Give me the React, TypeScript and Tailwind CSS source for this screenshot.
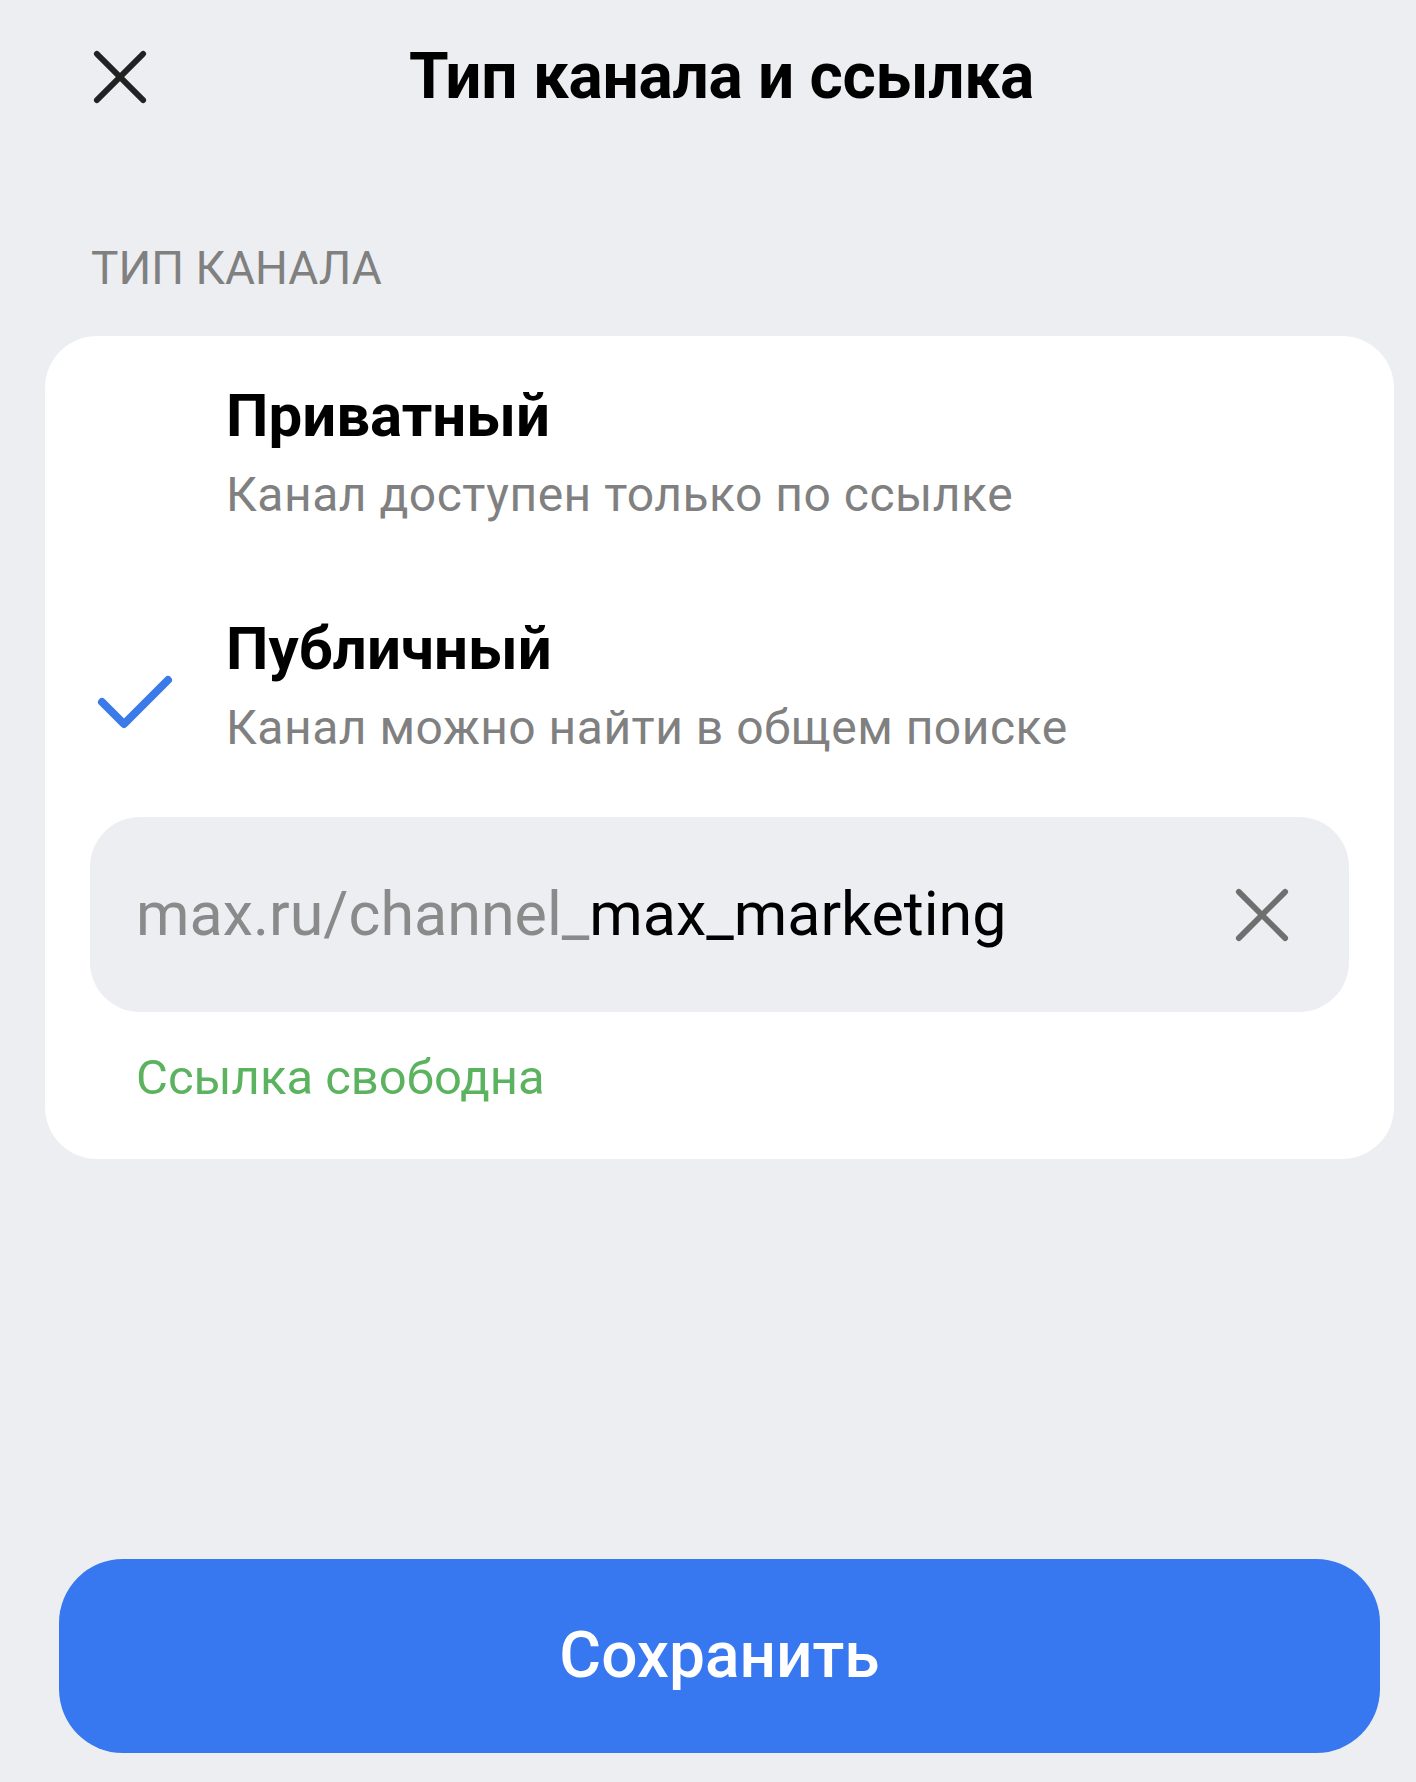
import React, { useState } from 'react';

const CloseIcon: React.FC<{ className?: string }> = ({ className }) => (
  <svg className={className} viewBox="0 0 56 56" fill="none" stroke="currentColor" strokeLinecap="round">
    <path strokeWidth={6} d="M4 4l48 48M52 4L4 52" />
  </svg>
);

const CheckIcon: React.FC = () => (
  <svg className="w-[76px] h-[54px] text-[#3a7be9]" viewBox="0 0 76 54" fill="none" stroke="currentColor" strokeLinecap="round" strokeLinejoin="round">
    <path strokeWidth={8} d="M5 27l22 22L71 5" />
  </svg>
);

type ChannelType = 'private' | 'public';

const options: { id: ChannelType; title: string; description: string }[] = [
  { id: 'private', title: 'Приватный', description: 'Канал доступен только по ссылке' },
  { id: 'public', title: 'Публичный', description: 'Канал можно найти в общем поиске' },
];

const App: React.FC = () => {
  const [type, setType] = useState<ChannelType>('public');
  const [slug, setSlug] = useState('max_marketing');

  return (
    <div className="min-h-[1782px] w-[1416px] bg-[#edeef2] flex flex-col font-['Roboto',sans-serif]">
      <header className="flex items-center h-[154px] pl-[93px] pr-[120px]">
        <button className="w-[54px] h-[54px] text-[#222222]">
          <CloseIcon className="w-[54px] h-[54px]" />
        </button>
        <h1 className="flex-1 text-center text-[64px] font-bold text-black tracking-[-0.3px]">
          Тип канала и ссылка
        </h1>
      </header>

      <div className="pl-[91px] pt-[91px] pb-[45px] text-[46px] leading-none text-[#808080] uppercase">
        Тип канала
      </div>

      <div className="ml-[45px] mr-[22px] bg-white rounded-[52px] px-[45px] pt-[45px] pb-[51px]">
        <div className="flex flex-col gap-[87px]">
          {options.map((o) => (
            <button
              key={o.id}
              onClick={() => setType(o.id)}
              className="flex items-start w-full text-left"
            >
              <div className="w-[136px] pl-[7px] pt-[61px]">
                {type === o.id && <CheckIcon />}
              </div>
              <div className="flex flex-col gap-[12px]">
                <span className="text-[60px] font-bold leading-[70px] text-black">{o.title}</span>
                <span className="text-[48px] leading-[64px] tracking-[0.5px] text-[#808080]">{o.description}</span>
              </div>
            </button>
          ))}
        </div>

        {type === 'public' && (
          <>
            <div className="mt-[57px] h-[195px] rounded-[50px] bg-[#edeef2] flex items-center pl-[46px] pr-[60px]">
              <span className="text-[61px] text-[#8a8a8a] whitespace-nowrap">max.ru/channel_</span>
              <input
                value={slug}
                onChange={(e) => setSlug(e.target.value)}
                className="flex-1 min-w-0 bg-transparent outline-none text-[61px] text-black"
              />
              <button onClick={() => setSlug('')} className="w-[54px] h-[54px] text-[#6f6f6f]">
                <CloseIcon className="w-[54px] h-[54px]" />
              </button>
            </div>
            <div className="pl-[46px] pt-[36px] text-[49px] leading-[60px] text-[#5bb35f]">Ссылка свободна</div>
          </>
        )}
      </div>

      <div className="flex-1" />

      <div className="ml-[59px] mr-[36px] mb-[29px]">
        <button className="w-full h-[194px] rounded-[64px] bg-[#3777f0] text-white text-[64px] font-medium">
          Сохранить
        </button>
      </div>
    </div>
  );
};

export default App;
